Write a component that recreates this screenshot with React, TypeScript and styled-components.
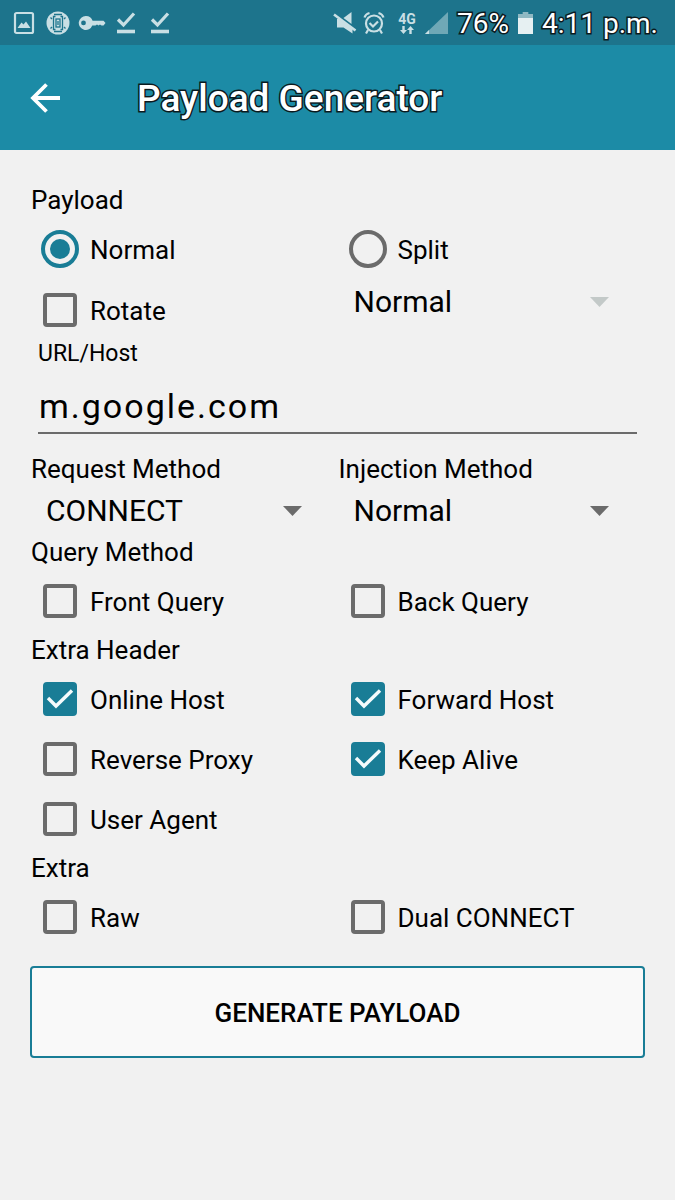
import React from "react";
import styled, { createGlobalStyle, css } from "styled-components";

const TEAL = "#1c8ba6";
const TEAL_DARK = "#1d748c";
const CONTROL = "#197d96";
const GREY = "#6b6b6b";

const GlobalStyle = createGlobalStyle`
  * { box-sizing: border-box; }
  body {
    margin: 0;
    background: #f1f1f1;
    color: #000;
    font-family: Roboto, "Liberation Sans", sans-serif;
  }
`;

const Screen = styled.div`
  display: flex;
  flex-direction: column;
  min-height: 100vh;
  background: #f1f1f1;
`;

const outlined = css`
  color: #fff;
  -webkit-text-stroke: 3px #0b1a1e;
  paint-order: stroke fill;
`;

const StatusBar = styled.div`
  display: flex;
  justify-content: space-between;
  align-items: center;
  height: 45px;
  padding: 0 14px 0 7px;
  background: ${TEAL_DARK};
  color: #c9dfe4;
`;

const Notifications = styled.div`
  display: flex;
  align-items: center;
`;

const IconSlot = styled.span`
  display: flex;
  justify-content: center;
  width: 34px;
`;

const Indicators = styled.div`
  display: flex;
  align-items: center;
  gap: 6px;
`;

const StatusText = styled.span`
  ${outlined}
  margin: 0 3px;
  padding-top: 2px;
  font-size: 28px;
  line-height: 43px;
`;

const Network = styled.span`
  display: flex;
  flex-direction: column;
  align-items: center;
  width: 28px;
  padding-left: 4px;
  font-size: 14px;
  line-height: 14px;
  font-weight: 700;
`;

const AppBar = styled.header`
  display: flex;
  align-items: center;
  gap: 62px;
  height: 105px;
  padding: 0 30px 0 15px;
  background: ${TEAL};
`;

const BackButton = styled.button`
  display: grid;
  place-items: center;
  width: 60px;
  height: 60px;
  padding: 0;
  border: 0;
  background: none;
`;

const Title = styled.h1`
  ${outlined}
  margin: 0;
  padding-top: 2px;
  font-size: 37px;
  line-height: 60px;
  font-weight: 500;
`;

const Form = styled.form`
  padding: 31px 30px;
`;

const Row = styled.div`
  display: grid;
  grid-template-columns: 1fr 1fr;
  align-items: start;
`;

const headingText = css`
  padding: 0 0 0 1px;
  font-size: 26px;
  line-height: 38px;
`;

const Heading = styled.label`
  ${headingText}
  display: block;
`;

const Group = styled.fieldset`
  min-width: 0;
  margin: 0;
  padding: 0;
  border: 0;
`;

const Legend = styled.legend`
  ${headingText}
`;

const Option = styled.label<{ $tall?: boolean }>`
  display: flex;
  align-items: center;
  height: ${(p) => (p.$tall ? 62 : 60)}px;
  font-size: 26px;
  line-height: 30px;
`;

const OptionText = styled.span`
  padding-top: 2px;
`;

const ControlBox = styled.span`
  display: grid;
  place-items: center;
  flex: none;
  width: 60px;
  height: 60px;
  > * {
    grid-area: 1 / 1;
  }
`;

const Checkbox = styled.input`
  appearance: none;
  width: 34px;
  height: 34px;
  margin: 0;
  border: 4px solid ${GREY};
  border-radius: 4px;
  &:checked {
    border-color: ${CONTROL};
    background: ${CONTROL};
  }
  & + svg {
    visibility: hidden;
    pointer-events: none;
  }
  &:checked + svg {
    visibility: visible;
  }
`;

const Radio = styled.input`
  appearance: none;
  display: grid;
  place-items: center;
  width: 38px;
  height: 38px;
  margin: 0;
  border: 4px solid ${GREY};
  border-radius: 50%;
  &:checked {
    border-color: ${CONTROL};
  }
  &:checked::before {
    content: "";
    width: 20px;
    height: 20px;
    border-radius: 50%;
    background: ${CONTROL};
  }
`;

const SelectBox = styled.div`
  display: grid;
  align-items: center;
  justify-items: end;
  > * {
    grid-area: 1 / 1;
  }
  > svg {
    margin-right: 36px;
    pointer-events: none;
  }
`;

const Select = styled.select`
  appearance: none;
  width: 100%;
  height: 45px;
  padding: 0 60px 0 16px;
  border: 0;
  background: none;
  color: #000;
  opacity: 1;
  font-family: inherit;
  font-size: 30px;
`;

const UrlField = styled.div`
  display: flex;
  flex-direction: column;
  padding: 0 8px 16px;
`;

const UrlLabel = styled.label`
  font-size: 23px;
  line-height: 25px;
`;

const UrlInput = styled.input`
  width: 100%;
  height: 68px;
  padding: 14px 0 0 1px;
  border: 0;
  border-bottom: 2px solid ${GREY};
  border-radius: 0;
  outline: 0;
  background: none;
  color: #000;
  font-family: inherit;
  font-size: 34px;
  letter-spacing: 2px;
`;

const GenerateButton = styled.button`
  width: 100%;
  height: 92px;
  margin-top: 19px;
  padding: 2px 0 0;
  border: 2px solid ${CONTROL};
  border-radius: 4px;
  background: #f9f9f9;
  color: #000;
  font-family: inherit;
  font-size: 26px;
  font-weight: 500;
`;

function Check({ label, checked, tall }: { label: string; checked?: boolean; tall?: boolean }) {
  return (
    <Option $tall={tall}>
      <ControlBox>
        <Checkbox type="checkbox" defaultChecked={checked} />
        <svg width="34" height="34" viewBox="0 0 34 34" fill="none" stroke="#f4fbfc" strokeWidth="3.400">
          <path d="M5 16L13 24L29 8.500" />
        </svg>
      </ControlBox>
      <OptionText>{label}</OptionText>
    </Option>
  );
}

function RadioOption({ label, checked }: { label: string; checked?: boolean }) {
  return (
    <Option>
      <ControlBox>
        <Radio type="radio" name="payload" defaultChecked={checked} />
      </ControlBox>
      <OptionText>{label}</OptionText>
    </Option>
  );
}

function Dropdown({
  id,
  options,
  disabled,
  name,
}: {
  id?: string;
  options: string[];
  disabled?: boolean;
  name?: string;
}) {
  return (
    <SelectBox>
      <Select id={id} aria-label={name} disabled={disabled}>
        {options.map((o) => (
          <option key={o}>{o}</option>
        ))}
      </Select>
      <svg width="19" height="10" viewBox="0 0 19 10" fill={disabled ? "#c3c9c8" : GREY}>
        <path d="M0 0H19L9.500 10Z" />
      </svg>
    </SelectBox>
  );
}

function DoneIcon() {
  return (
    <svg width="20" height="24" viewBox="0 0 20 24" fill="none" stroke="currentColor">
      <path d="M2 8.500L7.500 14L18 2.500" strokeWidth="3.200" />
      <path d="M1 20.500H19" strokeWidth="3.600" />
    </svg>
  );
}

export default function App() {
  return (
    <Screen>
      <GlobalStyle />
      <StatusBar>
        <Notifications>
          <IconSlot>
            <svg width="22" height="24" viewBox="0 0 22 24">
              <rect x="2" y="2" width="18" height="20" rx="1.500" fill="none" stroke="currentColor" strokeWidth="2.200" />
              <path d="M4.500 17L8.500 11.500L10.500 13.500L13 10.500L17.500 17Z" fill="currentColor" />
            </svg>
          </IconSlot>
          <IconSlot>
            <svg width="24" height="24" viewBox="0 0 24 24">
              <circle cx="12" cy="12" r="11.500" fill="currentColor" />
              <g fill="none" stroke={TEAL_DARK} strokeWidth="1.300">
                <path d="M9.500 5.500H7.500V18.500H9.500M14.500 5.500H16.500V18.500H14.500M4.500 6.500L6 8M4.500 17.500L6 16M19.500 6.500L18 8M19.500 17.500L18 16M8 3.500H16M8 20.500H16" />
                <rect x="10" y="8" width="4" height="8" />
                <path d="M12 10V14" />
              </g>
            </svg>
          </IconSlot>
          <IconSlot>
            <svg width="28" height="16" viewBox="0 0 28 16">
              <path
                fill="currentColor"
                fillRule="evenodd"
                d="M8 1A7 7 0 1 0 14.300 10.500H17.500L19 9.500L20.500 10.500L22 9.500L23.500 10.500H25.500L27.500 8L25.500 5.800H14.600A7 7 0 0 0 8 1ZM5.500 5.500A2.400 2.400 0 1 1 5.500 10.300A2.400 2.400 0 1 1 5.500 5.500Z"
              />
            </svg>
          </IconSlot>
          <IconSlot>
            <DoneIcon />
          </IconSlot>
          <IconSlot>
            <DoneIcon />
          </IconSlot>
        </Notifications>
        <Indicators>
          <svg width="24" height="24" viewBox="0 0 24 24" fill="currentColor">
            <path d="M4 8H6L19.500 17.500V22.500L10.500 16.500H4Z" />
            <path d="M10.500 7L18.500 1V13Z" />
            <path d="M1 3.500L22.500 19.500" stroke="currentColor" strokeWidth="2.600" />
          </svg>
          <svg width="22" height="24" viewBox="0 0 22 24" fill="none" stroke="currentColor" strokeWidth="2.200">
            <circle cx="11" cy="12.500" r="8" />
            <path d="M1.500 6.500Q2.500 3 6.500 2M20.500 6.500Q19.500 3 15.500 2M6.500 12L10 15.500L15 10.500M5 19L3 22.500M17 19L19 22.500" />
          </svg>
          <Network>
            4G
            <svg width="14" height="8" viewBox="0 0 14 8" fill="currentColor">
              <path d="M2.300 0H4.700V4H7L3.500 8L0 4H2.300ZM9.300 8H11.700V4H14L10.500 0L7 4H9.300Z" />
            </svg>
          </Network>
          <svg width="23" height="24" viewBox="0 0 23 24">
            <path d="M0 23L23 1V23Z" fill="#6fa8b6" />
            <path d="M0 23L4 19V23Z" fill="currentColor" />
          </svg>
          <StatusText>76%</StatusText>
          <svg width="15" height="24" viewBox="0 0 16 24" preserveAspectRatio="none">
            <path d="M5 1H11V3H16V7H0V3H5Z" fill="#8fb9c3" />
            <path d="M0 7H16V23H0Z" fill="#e6f0f2" />
          </svg>
          <StatusText>4:11 p.m.</StatusText>
        </Indicators>
      </StatusBar>

      <AppBar>
        <BackButton type="button" aria-label="Back">
          <svg width="30" height="30" viewBox="0 0 30 30" fill="none" stroke="#fff" strokeWidth="3.800">
            <path d="M30 15H3M16.500 1.500L3 15L16.500 28.500" />
          </svg>
        </BackButton>
        <Title>Payload Generator</Title>
      </AppBar>

      <Form onSubmit={(e) => e.preventDefault()}>
        <Group>
          <Legend>Payload</Legend>
          <Row>
            <RadioOption label="Normal" checked />
            <RadioOption label="Split" />
          </Row>
          <Row>
            <Check label="Rotate" tall />
            <Dropdown name="Split type" options={["Normal"]} disabled />
          </Row>
        </Group>

        <UrlField>
          <UrlLabel htmlFor="url">URL/Host</UrlLabel>
          <UrlInput id="url" type="text" defaultValue="m.google.com" />
        </UrlField>

        <Row>
          <div>
            <Heading htmlFor="request">Request Method</Heading>
            <Dropdown id="request" options={["CONNECT", "GET", "POST", "PUT"]} />
          </div>
          <div>
            <Heading htmlFor="injection">Injection Method</Heading>
            <Dropdown id="injection" options={["Normal"]} />
          </div>
        </Row>

        <Group>
          <Legend>Query Method</Legend>
          <Row>
            <Check label="Front Query" />
            <Check label="Back Query" />
          </Row>
        </Group>

        <Group>
          <Legend>Extra Header</Legend>
          <Row>
            <Check label="Online Host" checked />
            <Check label="Forward Host" checked />
            <Check label="Reverse Proxy" />
            <Check label="Keep Alive" checked />
            <Check label="User Agent" />
          </Row>
        </Group>

        <Group>
          <Legend>Extra</Legend>
          <Row>
            <Check label="Raw" />
            <Check label="Dual CONNECT" />
          </Row>
        </Group>

        <GenerateButton type="submit">GENERATE PAYLOAD</GenerateButton>
      </Form>
    </Screen>
  );
}
